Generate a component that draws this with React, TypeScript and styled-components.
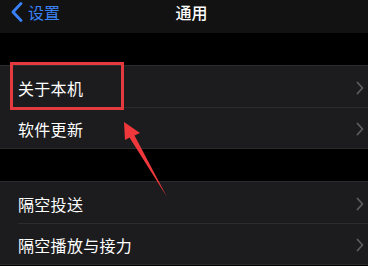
import React from 'react';
import styled, { createGlobalStyle } from 'styled-components';

const GlobalStyle = createGlobalStyle`
  html, body {
    margin: 0;
    padding: 0;
    background: #000;
  }
  body {
    font-family: "Noto Sans CJK SC", "Noto Sans", sans-serif;
    -webkit-font-smoothing: antialiased;
  }
`;

const Screen = styled.div`
  position: relative;
  width: 368px;
  height: 266px;
  overflow: hidden;
  background: #000;
`;

const NavBar = styled.div`
  height: 33px;
  background: #121212;
  display: grid;
  grid-template-columns: 1fr auto 1fr;
  align-items: center;
  padding-bottom: 9px;
  box-sizing: border-box;
`;

const BackButton = styled.div`
  display: flex;
  align-items: center;
  gap: 5px;
  padding-left: 11px;
  color: #3a82f7;
  font-size: 16px;
  line-height: 1;
`;

const NavTitle = styled.div`
  color: #fff;
  font-size: 16px;
  font-weight: 500;
  line-height: 1;
  margin-left: 15px;
`;

const Gap = styled.div<{ $h: number }>`
  height: ${(p) => p.$h}px;
  background: #000;
`;

const Group = styled.div`
  background: #1c1c1e;
  border-top: 1px solid #2c2c2e;
  border-bottom: 1px solid #2c2c2e;
`;

const Row = styled.div`
  display: flex;
  align-items: center;
  height: 41px;
  padding-left: 18px;
  position: relative;

  & + & {
    &::before {
      content: '';
      position: absolute;
      left: 18px;
      right: 0;
      top: 0;
      height: 1px;
      background: #2c2c2e;
    }
  }
`;

const Label = styled.span`
  flex: 1;
  color: #fff;
  font-size: 16px;
  line-height: 1;
  padding-top: 3px;
  letter-spacing: 0.3px;
`;

const Chevron = styled.svg`
  width: 8px;
  height: 14px;
  margin-right: 4px;
  margin-top: 3px;
`;

const Highlight = styled.div`
  position: absolute;
  left: 10px;
  top: 62px;
  width: 114px;
  height: 48px;
  box-sizing: border-box;
  border: 3px solid #e23a3f;
`;

const Arrow = styled.svg`
  position: absolute;
  left: 0;
  top: 0;
  width: 368px;
  height: 266px;
  pointer-events: none;
`;

const ChevronRight = () => (
  <Chevron viewBox="0 0 8 14">
    <path d="M1.5 1.5 L6.5 7 L1.5 12.5" fill="none" stroke="#5c5c60" strokeWidth="1.8" strokeLinecap="round" strokeLinejoin="round" />
  </Chevron>
);

const groups = [
  ['关于本机', '软件更新'],
  ['隔空投送', '隔空播放与接力'],
];

const App: React.FC = () => {
  return (
    <>
      <GlobalStyle />
      <Screen>
        <NavBar>
          <BackButton>
            <svg width="12" height="20" viewBox="0 0 12 20">
              <path d="M10 1.5 L2 10 L10 18.5" fill="none" stroke="#3a82f7" strokeWidth="2.8" strokeLinecap="round" strokeLinejoin="round" />
            </svg>
            <span>设置</span>
          </BackButton>
          <NavTitle>通用</NavTitle>
          <div />
        </NavBar>
        <Gap $h={32} />
        <Group>
          {groups[0].map((t) => (
            <Row key={t}>
              <Label>{t}</Label>
              <ChevronRight />
            </Row>
          ))}
        </Group>
        <Gap $h={32} />
        <Group>
          {groups[1].map((t) => (
            <Row key={t}>
              <Label>{t}</Label>
              <ChevronRight />
            </Row>
          ))}
        </Group>
        <Highlight />
        <Arrow viewBox="0 0 368 266">
          <path d="M124 122 L140 133 L134.5 135.5 L167 197 L129.5 137.5 L125 140 Z" fill="#f0383c" />
        </Arrow>
      </Screen>
    </>
  );
};

export default App;
